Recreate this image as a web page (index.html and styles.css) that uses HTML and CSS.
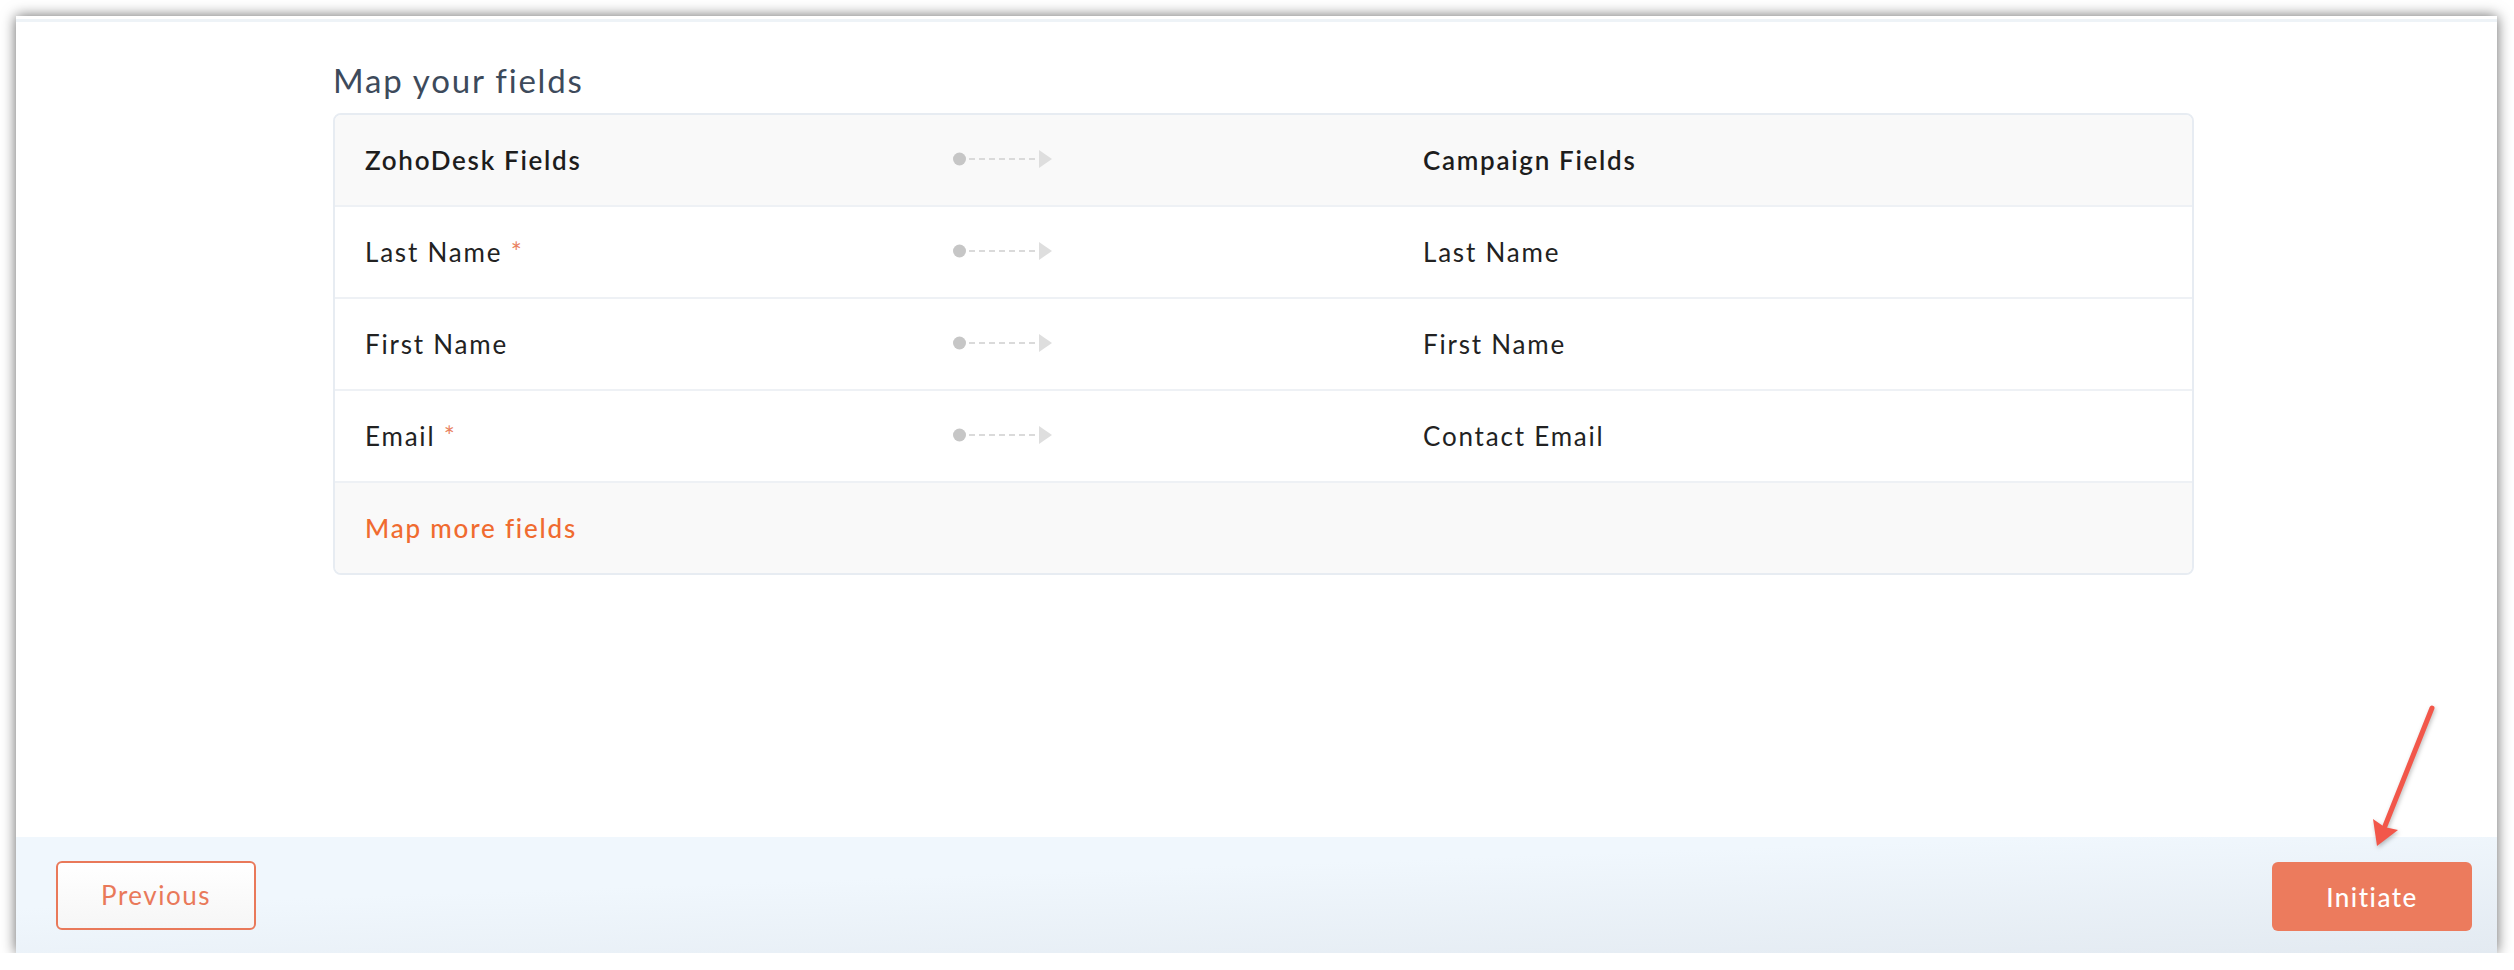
FILE: index.html
```html
<!DOCTYPE html>
<html lang="en">
<head>
    <meta charset="UTF-8">
    <meta name="viewport" content="width=device-width, initial-scale=1.0">
    <title>Map your fields</title>
    <link rel="stylesheet" href="styles.css">
</head>
<body>
    <svg width="0" height="0" class="defs">
        <symbol id="link" viewBox="0 0 100 20">
            <circle cx="6.5" cy="10" r="6.5" fill="#c6c6c6"/>
            <line x1="16" y1="10" x2="85" y2="10" stroke="#dadada" stroke-width="2" stroke-dasharray="6 4"/>
            <polygon points="86,1 99,10 86,19" fill="#dedede"/>
        </symbol>
    </svg>

    <div class="window">
        <div class="topline"></div>

        <div class="content">
            <h2 class="title">Map your fields</h2>

            <div class="map-card">
                <div class="map-row head">
                    <span>ZohoDesk Fields</span>
                    <svg class="link"><use href="#link"/></svg>
                    <span>Campaign Fields</span>
                </div>
                <div class="map-row">
                    <span>Last Name <i class="req">*</i></span>
                    <svg class="link"><use href="#link"/></svg>
                    <span>Last Name</span>
                </div>
                <div class="map-row">
                    <span>First Name</span>
                    <svg class="link"><use href="#link"/></svg>
                    <span>First Name</span>
                </div>
                <div class="map-row">
                    <span>Email <i class="req">*</i></span>
                    <svg class="link"><use href="#link"/></svg>
                    <span>Contact Email</span>
                </div>
                <div class="map-row more">
                    <a href="#" class="more-link">Map more fields</a>
                </div>
            </div>
        </div>

        <div class="actions">
            <button class="btn ghost">Previous</button>
            <button class="btn primary">Initiate</button>
        </div>

        <!-- red hint arrow pointing at the Initiate button -->
        <svg class="pointer" width="120" height="180" viewBox="0 0 120 180">
            <line x1="92" y1="18" x2="45" y2="136" stroke="#f2574a" stroke-width="5" stroke-linecap="round"/>
            <polygon points="37,156 33,129 44.5,137 58,140" fill="#f2574a"/>
        </svg>
    </div>
</body>
</html>
```

FILE: styles.css
```css
body{
    margin: 0;
    background: #fff;
    font-family: Lato, "Open Sans", sans-serif;
    font-variant-ligatures: none;
}

.defs{
    position: absolute;
}

.window{
    position: relative;
    width: 2481px;
    height: 937px;
    margin: 16px 0 0 16px;
    background: #fff;
    display: flex;
    flex-direction: column;
    box-shadow: 0 0 13px rgba(0,0,0,0.6);
}

.topline{
    height: 3px;
    margin-top: 3px;
    background: #eef3f7;
}

.content{
    flex: 1;
    padding: 39px 0 0 317px;
}

.title{
    margin: 0 0 13px;
    font-size: 33px;
    font-weight: 400;
    line-height: 39px;
    letter-spacing: 1.8px;
    color: #3d4a5b;
}

.map-card{
    width: 1857px;
    border: 2px solid #e7ecf2;
    border-radius: 8px;
    overflow: hidden;
}

.map-row{
    display: grid;
    grid-template-columns: 588px 470px 1fr;
    align-items: center;
    height: 90px;
    padding-left: 30px;
    border-bottom: 2px solid #eef1f5;
    font-size: 26px;
    letter-spacing: 1.8px;
    color: #222;
}

.map-row.head{
    background: #f9f9f9;
    font-weight: 600;
    letter-spacing: 1.7px;
    color: #1d1d1d;
}

.map-row.more{
    border-bottom: none;
    background: #f9f9f9;
}

.link{
    width: 100px;
    height: 20px;
    margin-top: -3px;
}

.req{
    font-style: normal;
    color: #e9815f;
}

.more-link{
    color: #f06b30;
    text-decoration: none;
    font-weight: 500;
}

.actions{
    height: 116px;
    display: flex;
    justify-content: space-between;
    align-items: center;
    padding: 0 25px 0 40px;
    background: linear-gradient(178deg, #f0f7fd 35%, #e3eaf1 100%);
}

.btn{
    width: 200px;
    height: 69px;
    border-radius: 6px;
    font-family: Lato, sans-serif;
    font-size: 26px;
    letter-spacing: 1.5px;
    cursor: pointer;
}

.btn.ghost{
    border: 2px solid #e9795a;
    background: linear-gradient(#fff, #f6f6f6);
    color: #e9795a;
}

.btn.primary{
    border: none;
    background: #ec7b5d;
    color: #fff;
    font-weight: 500;
    margin-top: 3px;
}

.pointer{
    position: absolute;
    left: 2324px;
    top: 674px;
    filter: drop-shadow(1px 2px 2px rgba(0,0,0,0.25));
}
```
